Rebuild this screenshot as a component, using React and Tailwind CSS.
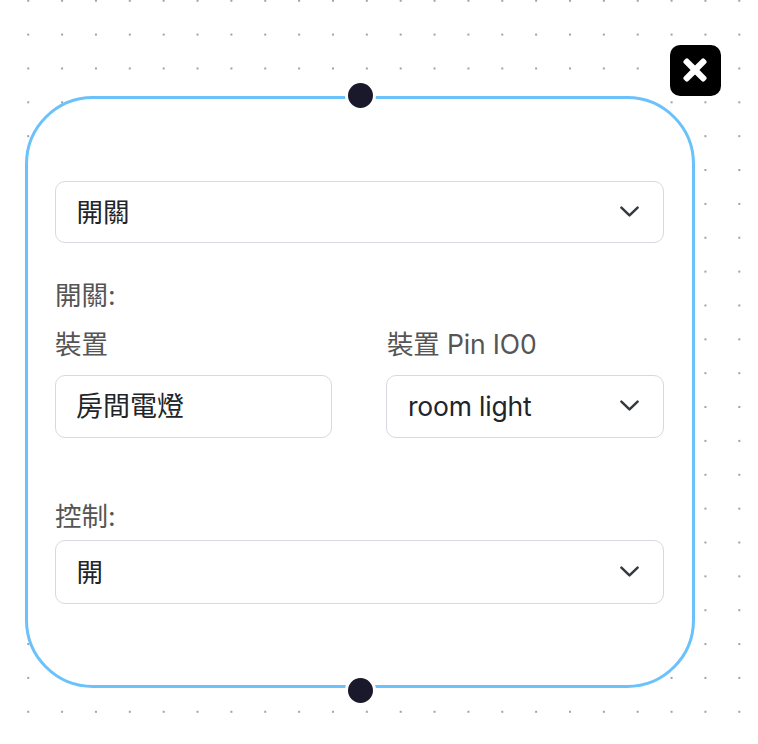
import { FaTimes } from "react-icons/fa";

function Chevron() {
  return (
    <svg
      className="mr-[20px] mb-px h-[27px] w-[27px] shrink-0"
      viewBox="0 0 16 16"
      fill="none"
      stroke="#343a40"
      strokeWidth="1.5"
      strokeLinecap="round"
      strokeLinejoin="round"
    >
      <path d="m3.2 5.7 4.8 4.6 4.8-4.6" />
    </svg>
  );
}

function Field({ value, select, className }) {
  return (
    <div
      className={`flex items-center justify-between rounded-[10px] border border-[#d6d9df] bg-white text-[#212529] ${className}`}
    >
      <span className="whitespace-nowrap">{value}</span>
      {select && <Chevron />}
    </div>
  );
}

function Handle({ className }) {
  return (
    <span
      className={`absolute h-[31px] w-[31px] rounded-full border-[3px] border-white bg-[#1a192b] ${className}`}
    />
  );
}

export default function App() {
  return (
    <div className="relative h-[744px] w-[758px] overflow-hidden bg-white font-['Inter','Noto_Sans_CJK_TC',sans-serif] text-[26.5px] leading-[40px] text-[#555555]">
      <svg className="absolute inset-0 h-full w-full">
        <defs>
          <pattern id="dots" x="11.3" y="-16.2" width="33.86" height="33.86" patternUnits="userSpaceOnUse">
            <circle cx="16.93" cy="16.93" r="1" fill="#81818a" />
          </pattern>
        </defs>
        <rect width="758" height="744" fill="url(#dots)" />
      </svg>

      <div className="absolute top-[96px] left-[24.5px] h-[592px] w-[670px] rounded-[68px] border-[3px] border-[#6bc2fb] bg-white">
        <div className="flex flex-col pt-[82px] pr-[27.5px] pl-[27.5px]">
          <Field value="開關" select className="h-[62px] pl-[20.5px]" />
          <div className="mt-[32px] h-[40px]">開關:</div>
          <div className="mt-[9px] grid grid-cols-[277px_278px] justify-between">
            <div>
              <div className="h-[40px]">裝置</div>
              <Field value="房間電燈" className="mt-[11px] h-[63px] pl-[20px] text-[27px]" />
            </div>
            <div>
              <div className="h-[40px] pl-px tracking-[-0.15px] whitespace-nowrap">裝置 Pin IO0</div>
              <Field value="room light" select className="mt-[11px] h-[63px] pb-px pl-[21px] tracking-[-0.2px]" />
            </div>
          </div>
          <div className="mt-[58px] h-[40px]">控制:</div>
          <Field value="開" select className="mt-[4px] h-[64px] pl-[20.5px]" />
        </div>
      </div>

      <Handle className="top-[80px] left-[345px]" />
      <Handle className="top-[675px] left-[345px]" />

      <button
        aria-label="Close"
        className="absolute top-[45px] left-[670px] flex h-[51px] w-[51px] items-center justify-center rounded-[10px] bg-black pr-px pb-px text-white"
      >
        <FaTimes className="h-[34px] w-[24px]" />
      </button>
    </div>
  );
}
